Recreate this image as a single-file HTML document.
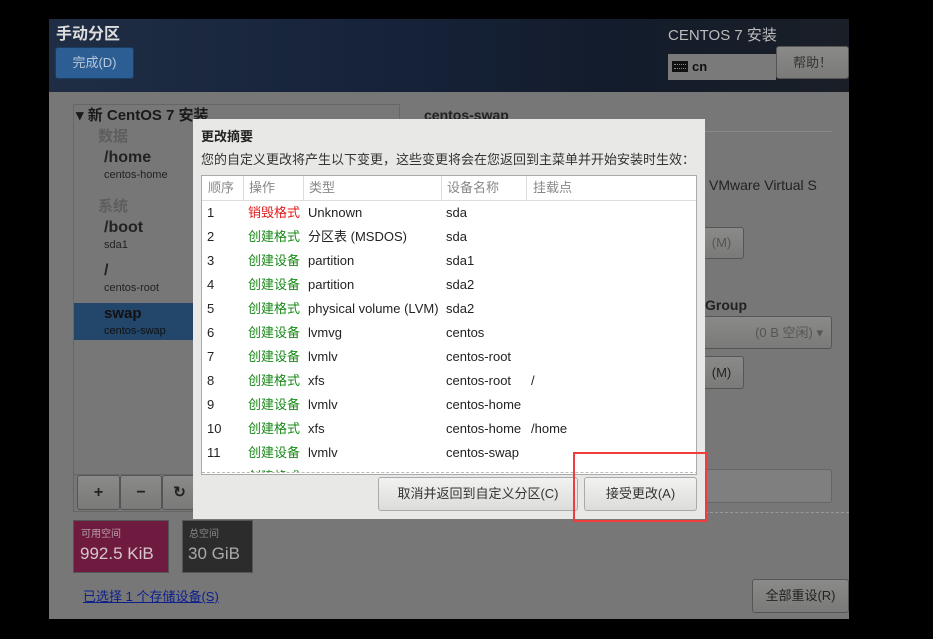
<!DOCTYPE html>
<html><head><meta charset="utf-8"><style>
*{margin:0;padding:0;box-sizing:border-box}
body{width:933px;height:639px;background:#000;position:relative;overflow:hidden;font-family:"Liberation Sans","Noto Sans CJK SC",sans-serif;font-size:13px;color:#222;line-height:16px}
.a{position:absolute;line-height:16px}
.app{left:49px;top:19px;width:800px;height:600px;background:#777}
.hdr{left:49px;top:19px;width:800px;height:73px;background:linear-gradient(90deg,#1f2d45 0%,#16233a 40%,#131c2c 70%,#1a1f27 100%)}
.btn{border:1px solid #555;border-radius:3px;background:linear-gradient(#8a8a88,#7a7a78);color:#222;text-align:center}
.row{position:absolute;left:0;width:495px;height:24px;font-size:13px}
.row span{position:absolute;top:4px;line-height:16px}
.r{color:#e01b1b}.g{color:#1a8a1a}
</style></head><body>
<div class="a app"></div>
<div class="a hdr"></div>
<div class="a" style="left:56px;top:26px;color:#ddd;font-weight:bold;font-size:16px;line-height:18px">手动分区</div>
<div class="a" style="left:55px;top:47px;width:79px;height:32px;background:#2c5e93;border:1px solid #1c3d63;border-radius:3px;color:#b8c8dc;font-size:13px;text-align:center;line-height:30px">完成(D)</div>
<div class="a" style="left:668px;top:27px;color:#bbb;font-size:15px;line-height:18px">CENTOS 7 安装</div>
<div class="a" style="left:668px;top:54px;width:108px;height:26px;background:#7a7a7a"></div>
<div class="a" style="left:672px;top:61px;width:16px;height:11px;background:#111;border:1px solid #111"><div style="margin:2px 1px;height:5px;border-top:1px dotted #888;border-bottom:1px dotted #888"></div></div>
<div class="a" style="left:692px;top:59px;font-weight:bold;color:#111">cn</div>
<div class="a btn" style="left:776px;top:46px;width:73px;height:33px;line-height:31px;color:#333">帮助！</div>

<div class="a" style="left:73px;top:104px;width:327px;height:408px;border:1px solid #666"></div>
<div class="a" style="left:76px;top:107px;font-weight:bold;font-size:15px;color:#1a1a1a;line-height:18px">▾ 新 CentOS 7 安装</div>
<div class="a" style="left:98px;top:128px;font-weight:bold;font-size:15px;color:#5e5e5e;line-height:18px">数据</div>
<div class="a" style="left:104px;top:149px;font-weight:bold;font-size:16px;color:#222;line-height:18px">/home</div>
<div class="a" style="left:104px;top:169px;font-size:11px;color:#222;line-height:13px">centos-home</div>
<div class="a" style="left:98px;top:198px;font-weight:bold;font-size:15px;color:#5e5e5e;line-height:18px">系统</div>
<div class="a" style="left:104px;top:219px;font-weight:bold;font-size:16px;color:#222;line-height:18px">/boot</div>
<div class="a" style="left:104px;top:239px;font-size:11px;color:#222;line-height:13px">sda1</div>
<div class="a" style="left:104px;top:262px;font-weight:bold;font-size:16px;color:#222;line-height:18px">/</div>
<div class="a" style="left:104px;top:282px;font-size:11px;color:#222;line-height:13px">centos-root</div>
<div class="a" style="left:74px;top:303px;width:125px;height:37px;background:#23466b"></div>
<div class="a" style="left:104px;top:305px;font-weight:bold;font-size:15px;color:#111;line-height:18px">swap</div>
<div class="a" style="left:104px;top:325px;font-size:11px;color:#111;line-height:13px">centos-swap</div>
<div class="a" style="left:74px;top:474px;width:125px;height:38px;border-top:1px solid #666"></div>
<div class="a btn" style="left:77px;top:475px;width:43px;height:35px;line-height:33px;font-size:16px;font-weight:bold">+</div>
<div class="a btn" style="left:120px;top:475px;width:42px;height:35px;line-height:33px;font-size:16px;font-weight:bold">−</div>
<div class="a btn" style="left:162px;top:475px;width:35px;height:35px;line-height:33px;font-size:15px;font-weight:bold">↻</div>
<div class="a" style="left:73px;top:520px;width:96px;height:53px;background:#6f1b40;border:1px solid #555"></div>
<div class="a" style="left:81px;top:529px;font-size:10px;color:#b7a0aa;line-height:12px">可用空间</div>
<div class="a" style="left:80px;top:544px;font-size:17px;color:#d7c6cd;line-height:20px">992.5 KiB</div>
<div class="a" style="left:182px;top:520px;width:71px;height:53px;background:#2c2c2c;border:1px solid #555"></div>
<div class="a" style="left:189px;top:529px;font-size:10px;color:#888;line-height:12px">总空间</div>
<div class="a" style="left:188px;top:544px;font-size:17px;color:#aaa;line-height:20px">30 GiB</div>
<div class="a" style="left:83px;top:589px;font-size:13px;color:#0c1f8c;text-decoration:underline">已选择 1 个存储设备(S)</div>
<div class="a btn" style="left:752px;top:579px;width:97px;height:34px;line-height:32px;font-size:13px">全部重设(R)</div>

<div class="a" style="left:424px;top:107px;font-weight:bold;font-size:14px;color:#222">centos-swap</div>
<div class="a" style="left:705px;top:131px;width:127px;height:1px;background:#888"></div>
<div class="a" style="left:709px;top:177px;font-size:14px;color:#222">VMware Virtual S</div>
<div class="a btn" style="left:700px;top:227px;width:44px;height:32px;line-height:30px;color:#555;border-left:none;border-radius:0 3px 3px 0">(M)</div>
<div class="a" style="left:705px;top:297px;font-weight:bold;font-size:14px;color:#222">Group</div>
<div class="a btn" style="left:700px;top:316px;width:132px;height:33px;line-height:31px;color:#555;text-align:right;padding-right:8px;border-left:none;border-radius:0 3px 3px 0">(0 B 空闲) ▾</div>
<div class="a btn" style="left:700px;top:356px;width:44px;height:33px;line-height:31px;color:#222;border-left:none;border-radius:0 3px 3px 0">(M)</div>
<div class="a" style="left:700px;top:469px;width:132px;height:34px;background:#7f7f7f;border:1px solid #666;border-left:none;border-radius:0 3px 3px 0"></div>
<div class="a" style="left:705px;top:512px;width:144px;border-top:1px dashed #999"></div>

<div class="a" style="left:193px;top:119px;width:512px;height:400px;background:#e8e8e6"></div>
<div class="a" style="left:201px;top:129px;font-weight:bold;font-size:13px;color:#222">更改摘要</div>
<div class="a" style="left:201px;top:152px;font-size:13px;color:#333">您的自定义更改将产生以下变更，这些变更将会在您返回到主菜单并开始安装时生效：</div>
<div class="a" style="left:201px;top:175px;width:496px;height:300px;background:#fff;border:1px solid #aaa;overflow:hidden">
 <div class="a" style="left:0;top:0;width:496px;height:25px;border-bottom:1px solid #ddd;color:#888;font-size:13px">
  <span class="a" style="left:6px;top:4px">顺序</span><span class="a" style="left:47px;top:4px">操作</span><span class="a" style="left:107px;top:4px">类型</span><span class="a" style="left:245px;top:4px">设备名称</span><span class="a" style="left:331px;top:4px">挂载点</span>
  <div class="a" style="left:41px;top:0;width:1px;height:25px;background:#ddd"></div>
  <div class="a" style="left:101px;top:0;width:1px;height:25px;background:#ddd"></div>
  <div class="a" style="left:239px;top:0;width:1px;height:25px;background:#ddd"></div>
  <div class="a" style="left:324px;top:0;width:1px;height:25px;background:#ddd"></div>
 </div>
 <div class="row" style="top:25px"><span style="left:5px">1</span><span class="r" style="left:46px">销毁格式</span><span style="left:106px">Unknown</span><span style="left:244px">sda</span></div>
 <div class="row" style="top:49px"><span style="left:5px">2</span><span class="g" style="left:46px">创建格式</span><span style="left:106px">分区表 (MSDOS)</span><span style="left:244px">sda</span></div>
 <div class="row" style="top:73px"><span style="left:5px">3</span><span class="g" style="left:46px">创建设备</span><span style="left:106px">partition</span><span style="left:244px">sda1</span></div>
 <div class="row" style="top:97px"><span style="left:5px">4</span><span class="g" style="left:46px">创建设备</span><span style="left:106px">partition</span><span style="left:244px">sda2</span></div>
 <div class="row" style="top:121px"><span style="left:5px">5</span><span class="g" style="left:46px">创建格式</span><span style="left:106px">physical volume (LVM)</span><span style="left:244px">sda2</span></div>
 <div class="row" style="top:145px"><span style="left:5px">6</span><span class="g" style="left:46px">创建设备</span><span style="left:106px">lvmvg</span><span style="left:244px">centos</span></div>
 <div class="row" style="top:169px"><span style="left:5px">7</span><span class="g" style="left:46px">创建设备</span><span style="left:106px">lvmlv</span><span style="left:244px">centos-root</span></div>
 <div class="row" style="top:193px"><span style="left:5px">8</span><span class="g" style="left:46px">创建格式</span><span style="left:106px">xfs</span><span style="left:244px">centos-root</span><span style="left:329px">/</span></div>
 <div class="row" style="top:217px"><span style="left:5px">9</span><span class="g" style="left:46px">创建设备</span><span style="left:106px">lvmlv</span><span style="left:244px">centos-home</span></div>
 <div class="row" style="top:241px"><span style="left:5px">10</span><span class="g" style="left:46px">创建格式</span><span style="left:106px">xfs</span><span style="left:244px">centos-home</span><span style="left:329px">/home</span></div>
 <div class="row" style="top:265px"><span style="left:5px">11</span><span class="g" style="left:46px">创建设备</span><span style="left:106px">lvmlv</span><span style="left:244px">centos-swap</span></div>
 <div class="row" style="top:289px"><span style="left:5px">12</span><span class="g" style="left:46px">创建格式</span></div>
 <div class="a" style="left:0;top:296px;width:496px;height:4px;background:#fff;border-top:1px dashed #bbb"></div>
</div>
<div class="a" style="left:378px;top:477px;width:200px;height:34px;border:1px solid #aaa;border-radius:3px;background:linear-gradient(#f2f2f0,#dcdcda);text-align:center;line-height:32px;color:#333">取消并返回到自定义分区(C)</div>
<div class="a" style="left:584px;top:477px;width:113px;height:34px;border:1px solid #aaa;border-radius:3px;background:linear-gradient(#f2f2f0,#dcdcda);text-align:center;line-height:32px;color:#333">接受更改(A)</div>
<div class="a" style="left:573px;top:452px;width:134px;height:70px;border:2px solid #f03c3c"></div>
</body></html>
